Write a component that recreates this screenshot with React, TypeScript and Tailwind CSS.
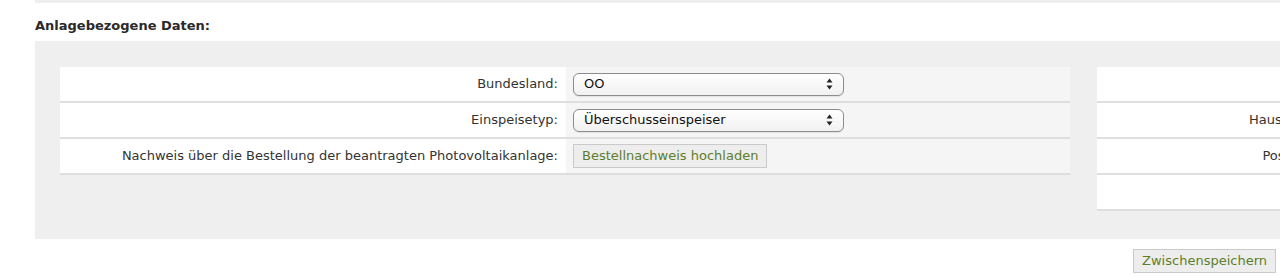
import React from "react";

function SelectBox({ value }: { value: string }) {
  return (
    <div className="relative flex h-[23px] w-[271px] items-center rounded-[6px] border border-[#8c8c8c] bg-gradient-to-b from-white to-[#f1f1f1] pl-[10px] text-[13px] text-[#111] shadow-[0_1px_1px_rgba(0,0,0,0.08)]">
      <span>{value}</span>
      <svg
        className="absolute right-[10px] top-1/2 -translate-y-1/2"
        width="7"
        height="12"
        viewBox="0 0 7 12"
      >
        <path d="M3.5 0.5 L6.5 4.5 L0.5 4.5 Z" fill="#222" />
        <path d="M3.5 11.5 L6.5 7.5 L0.5 7.5 Z" fill="#222" />
      </svg>
    </div>
  );
}

function Row({
  label,
  children,
}: {
  label: string;
  children?: React.ReactNode;
}) {
  return (
    <div className="flex h-[36px] border-b-2 border-[#dedede]">
      <div className="flex w-[506px] items-center justify-end bg-white pr-[8px]">
        {label}
      </div>
      <div className="flex w-[504px] items-center bg-[#f5f5f5] pl-[7px]">
        {children}
      </div>
    </div>
  );
}

function GreenButton({ text }: { text: string }) {
  return (
    <button className="flex h-[24px] items-center border border-[#cacaca] bg-[#ededed] px-[8px] text-[13px] text-[#5f7d28]">
      {text}
    </button>
  );
}

export default function App() {
  return (
    <div className="h-[277px] w-[1280px] overflow-hidden bg-white font-['DejaVu_Sans',sans-serif] text-[13px] text-[#333]">
      <div className="ml-[35px] h-[3px] bg-[#eeeeee]" />
      <h2 className="ml-[35px] mt-[15px] text-[13px] font-bold leading-[16px] text-[#2a2a2a]">
        Anlagebezogene Daten:
      </h2>
      <div className="ml-[35px] mt-[7px] flex h-[198px] w-[1600px] items-start gap-[27px] bg-[#efefef] pl-[25px] pt-[26px]">
        <div className="w-[1010px]">
          <Row label="Bundesland:">
            <SelectBox value="OO" />
          </Row>
          <Row label="Einspeisetyp:">
            <SelectBox value="Überschusseinspeiser" />
          </Row>
          <Row label="Nachweis über die Bestellung der beantragten Photovoltaikanlage:">
            <GreenButton text="Bestellnachweis hochladen" />
          </Row>
        </div>
        <div className="w-[500px] bg-white">
          {["", "Hausnummer:", "Postleitzahl:", ""].map((l, i) => (
            <div
              key={i}
              className="flex h-[36px] border-b-2 border-[#dedede]"
            >
              <div className="flex w-[252px] items-center justify-end pr-[8px]">
                {l}
              </div>
            </div>
          ))}
        </div>
      </div>
      <div className="mt-[10px] flex justify-end pr-[4px]">
        <GreenButton text="Zwischenspeichern" />
      </div>
    </div>
  );
}
